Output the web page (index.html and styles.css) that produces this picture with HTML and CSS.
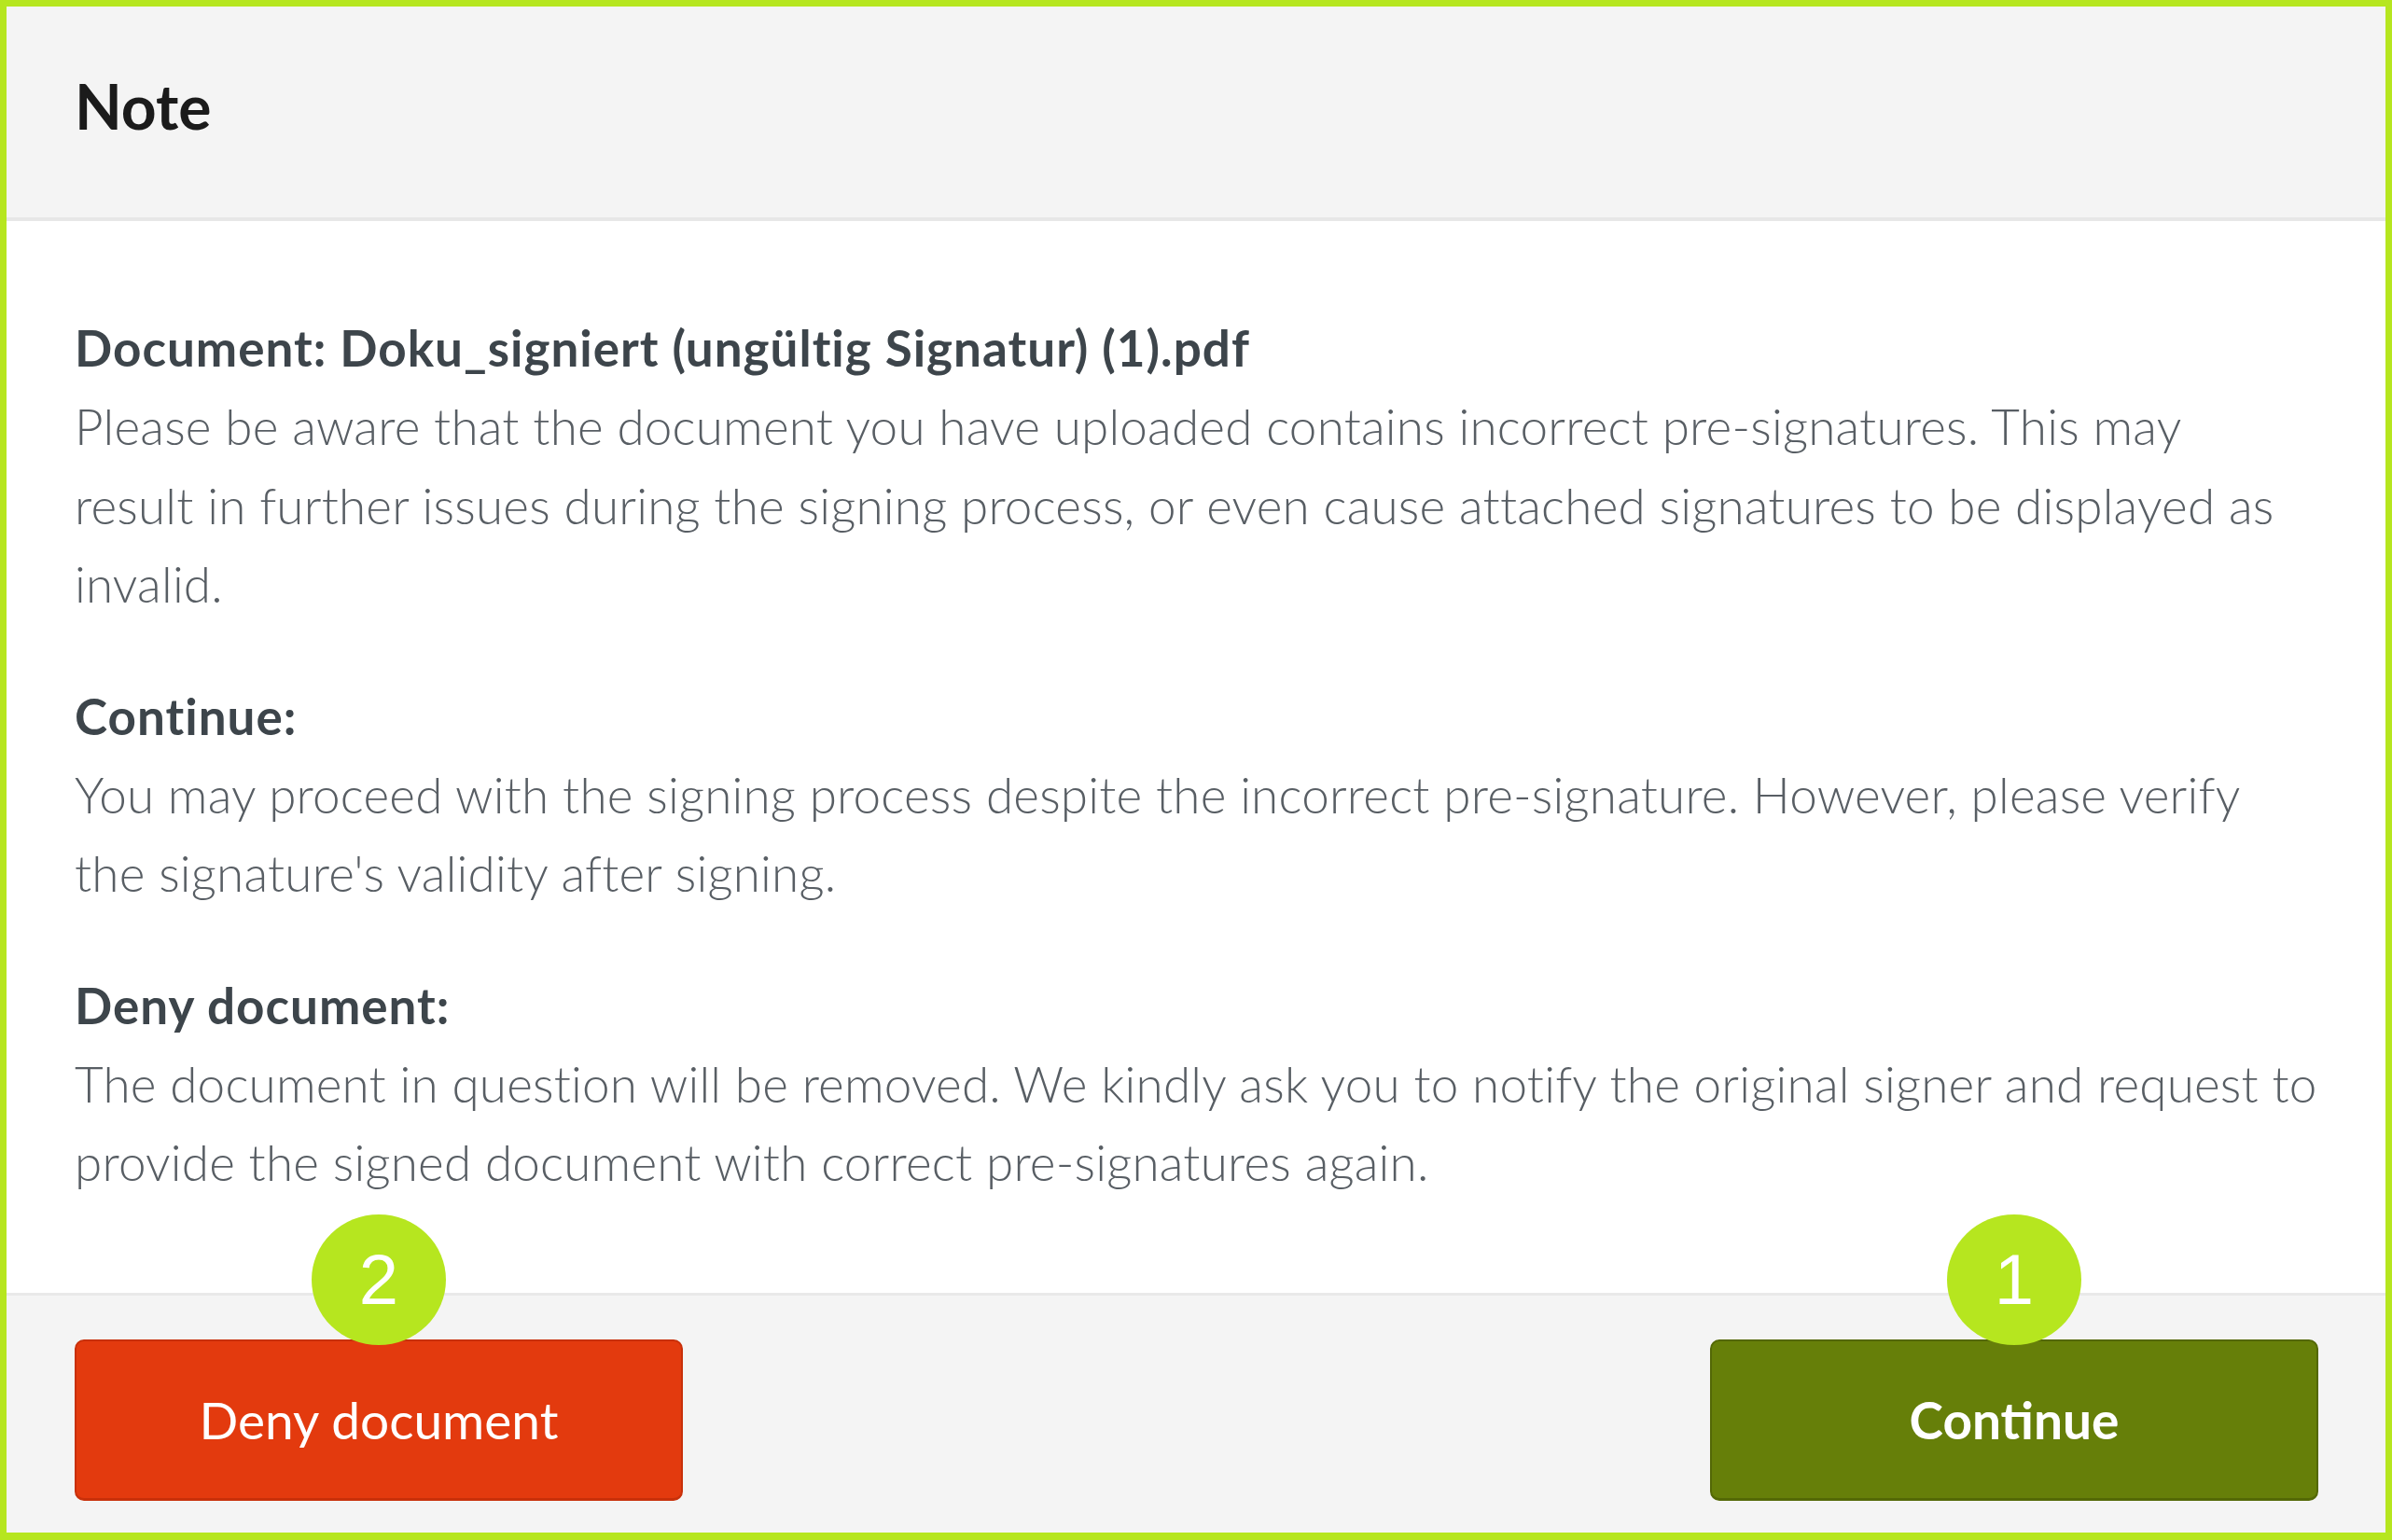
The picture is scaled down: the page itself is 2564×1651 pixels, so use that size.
FILE: index.html
```html
<!DOCTYPE html>
<html lang="en">
<head>
<meta charset="utf-8">
<title>Note</title>
<link rel="stylesheet" href="styles.css">
</head>
<body>
<div class="modal">
  <header class="modal-header">
    <h1 class="modal-title">Note</h1>
  </header>
  <main class="modal-body">
    <section class="block">
      <h2 class="block-title">Document: Doku_signiert (ungültig Signatur) (1).pdf</h2>
      <p class="block-text">Please be aware that the document you have uploaded contains incorrect pre-signatures. This may<br>result in further issues during the signing process, or even cause attached signatures to be displayed as invalid.</p>
    </section>
    <section class="block">
      <h2 class="block-title">Continue:</h2>
      <p class="block-text">You may proceed with the signing process despite the incorrect pre-signature. However, please verify<br>the signature's validity after signing.</p>
    </section>
    <section class="block">
      <h2 class="block-title">Deny document:</h2>
      <p class="block-text">The document in question will be removed. We kindly ask you to notify the original signer and request to provide the signed document with correct pre-signatures again.</p>
    </section>
  </main>
  <footer class="modal-footer">
    <div class="btn-wrap">
      <button class="btn btn-deny">Deny document</button>
      <span class="badge">2</span>
    </div>
    <div class="btn-wrap">
      <button class="btn btn-continue">Continue</button>
      <span class="badge">1</span>
    </div>
  </footer>
</div>
</body>
</html>
```

FILE: styles.css
```css
* { box-sizing: border-box; }
html, body {
  margin: 0;
  padding: 0;
  background: #ffffff;
}
body {
  font-family: "Lato", "Liberation Sans", sans-serif;
}
.modal {
  width: 2564px;
  height: 1651px;
  border: 7px solid #b6e61f;
  border-bottom-width: 8px;
  display: flex;
  flex-direction: column;
  background: #ffffff;
}
.modal-header {
  background: #f4f4f4;
  height: 230px;
  border-bottom: 4px solid #e7e7e7;
  padding: 0 73px 14px 73px;
  display: flex;
  align-items: center;
}
.modal-title {
  margin: 0;
  font-family: "Lato", sans-serif;
  font-weight: 700;
  font-size: 66px;
  color: #1b1b1b;
}
.modal-body {
  flex: 1;
  padding: 94px 60px 0 73px;
  display: flex;
  flex-direction: column;
  gap: 57px;
}
.block-title {
  margin: 0;
  font-weight: 700;
  font-size: 53px;
  letter-spacing: 1px;
  line-height: 84px;
  color: #3d454b;
}
.block-text {
  margin: 0;
  font-weight: 300;
  font-size: 53px;
  letter-spacing: 0.2px;
  line-height: 84.5px;
  color: #585e64;
}
.modal-footer {
  height: 257px;
  background: #f4f4f4;
  border-top: 3px solid #e9e9e9;
  padding: 47px 72px 0 73px;
  display: flex;
  justify-content: space-between;
  align-items: flex-start;
}
.btn-wrap {
  position: relative;
}
.btn {
  width: 652px;
  height: 173px;
  border-radius: 10px;
  font-family: "Lato", sans-serif;
  font-size: 55px;
  color: #ffffff;
  cursor: pointer;
  padding: 0;
}
.btn-deny {
  background: #e33a0e;
  border: 2px solid #c8300a;
  border-bottom-width: 3px;
  font-weight: 400;
}
.btn-continue {
  background: #667f09;
  border: 2px solid #536806;
  border-bottom-width: 3px;
  font-weight: 700;
}
.badge {
  position: absolute;
  top: -134px;
  left: 50%;
  margin-left: -72px;
  width: 144px;
  height: 140px;
  border-radius: 50%;
  background: #b6e61f;
  color: #ffffff;
  font-family: "Liberation Sans", Arial, sans-serif;
  font-size: 76px;
  line-height: 140px;
  text-align: center;
}
```
